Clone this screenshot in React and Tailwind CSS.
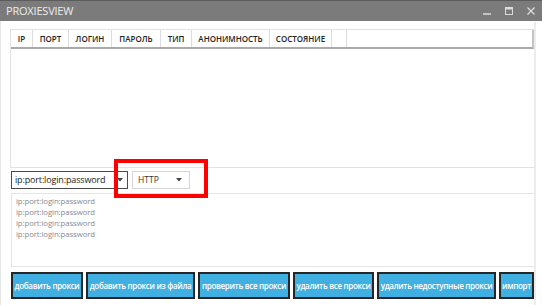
const columns = [
  { label: 'IP', w: 'w-[22px]' },
  { label: 'ПОРТ', w: 'w-[36px]' },
  { label: 'ЛОГИН', w: 'w-[43px]' },
  { label: 'ПАРОЛЬ', w: 'w-[49px]' },
  { label: 'ТИП', w: 'w-[31px]' },
  { label: 'АНОНИМНОСТЬ', w: 'w-[78px]' },
  { label: 'СОСТОЯНИЕ', w: 'w-[62px]' },
  { label: '', w: 'w-[15px]' },
]

const buttons = [
  { label: 'добавить прокси', w: 'w-[72px]' },
  { label: 'добавить прокси из файла', w: 'w-[109px]' },
  { label: 'проверить все прокси', w: 'w-[92px]' },
  { label: 'удалить все прокси', w: 'w-[81px]' },
  { label: 'удалить недоступные прокси', w: 'w-[119px]' },
  { label: 'импорт', w: 'w-[35px]' },
]

function Caret() {
  return (
    <svg width="6" height="4" viewBox="0 0 6 4" className="shrink-0">
      <path d="M0 0h6L3 3.5z" fill="#444" />
    </svg>
  )
}

export default function App() {
  return (
    <div className="relative w-[542px] h-[305px] overflow-hidden bg-white font-['Open_Sans','Noto_Sans',sans-serif]">
      {/* title bar */}
      <div className="h-[21px] bg-[#7b7b7b] border-t border-[#5c5c5c] flex items-center justify-between pl-[6px] pr-[7px]">
        <span className="text-[11px] text-[#ececec] tracking-[-0.2px]">PROXIESVIEW</span>
        <div className="flex items-center gap-[14px] text-[#dcdcdc]">
          <svg width="8" height="8" viewBox="0 0 8 8"><path d="M0 7h8" stroke="currentColor" strokeWidth="1.5" /></svg>
          <svg width="8" height="8" viewBox="0 0 8 8"><rect x="0.5" y="0.5" width="7" height="7" fill="none" stroke="currentColor" /><path d="M0 1.5h8" stroke="currentColor" strokeWidth="2" /></svg>
          <svg width="8" height="8" viewBox="0 0 8 8"><path d="M0.5 0.5l7 7M7.5 0.5l-7 7" stroke="currentColor" strokeWidth="1.3" /></svg>
        </div>
      </div>

      <div className="flex flex-col pl-[9px] pt-[8px] border-l border-[#e4e4e4] h-[284px]">
        {/* proxy list */}
        <div className="w-[525px] h-[139px] border border-[#e2e2e2] border-r-[#d8d8d8] flex flex-col">
          <div className="h-[19px] flex border-b-2 border-[#a9a9a9] border-r-2 border-r-[#c4c4c4]">
            {columns.map((c, i) => (
              <div key={i} className={`${c.w} shrink-0 border-r border-[#dcdcdc] flex items-center justify-center text-[8px] font-semibold text-[#222]`}>
                {c.label}
              </div>
            ))}
            <div className="flex-1" />
          </div>
        </div>

        {/* inputs */}
        <div className="flex gap-[4px] mt-[3px] ml-[1px] h-[18px]">
          <div className="w-[117px] border border-[#4a4a4a] flex items-center justify-between pl-[3px] pr-[4px]">
            <span className="text-[9px] text-[#222] tracking-[-0.15px]">ip:port:login:password</span>
            <Caret />
          </div>
          <div className="w-[58px] border border-[#d6d6d6] flex items-center justify-between pl-[5px] pr-[7px]">
            <span className="text-[8.5px] text-[#333]">HTTP</span>
            <Caret />
          </div>
        </div>

        {/* textarea */}
        <div className="w-[524px] h-[74px] mt-[4px] ml-[1px] border border-[#e4e4e4] pt-[2px] pl-[4px] flex flex-col">
          {[0, 1, 2, 3].map(i => (
            <div key={i} className="text-[7.8px] leading-[11px] text-[#8a8a8a] tracking-[-0.1px]">ip:port:login:password</div>
          ))}
        </div>

        {/* buttons */}
        <div className="flex gap-[3px] mt-[5px] ml-[1px] h-[27px]">
          {buttons.map((b, i) => (
            <div key={i} className={`${b.w} shrink-0 bg-[#3fb0e1] border-2 border-[#262626] flex items-center justify-center text-[8px] font-semibold text-white whitespace-nowrap tracking-[-0.3px]`}>
              {b.label}
            </div>
          ))}
        </div>
      </div>

      {/* right window edge */}
      <div className="absolute left-[534px] top-[22px] w-[2px] h-[283px] bg-[#ececec]" />

      {/* highlight */}
      <div className="absolute left-[114px] top-[159px] w-[94px] h-[39px] border-4 border-[#ff0000]" />
    </div>
  )
}
